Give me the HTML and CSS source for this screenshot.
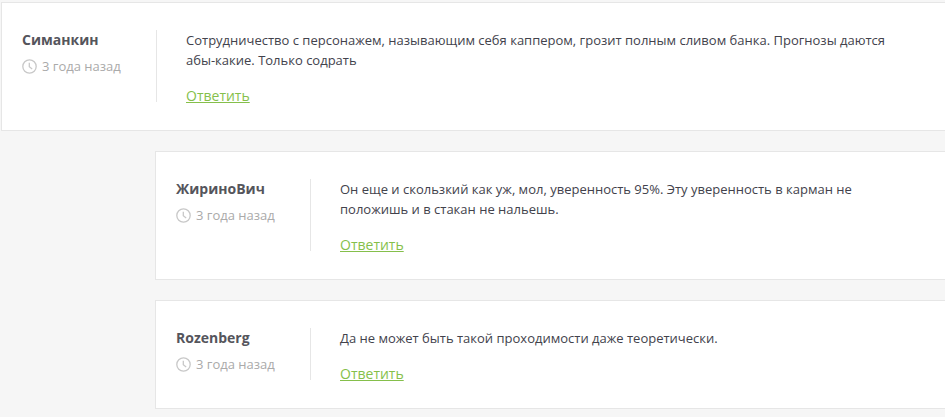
FILE: index.html
```
<!DOCTYPE html>
<html lang="ru">
<head>
    <meta charset="UTF-8">
    <meta name="viewport" content="width=device-width, initial-scale=1.0">
    <title>Комментарии</title>
    <link rel="stylesheet" href="styles.css">
</head>
<body>

    <div class="comments">
        <div class="comment">
            <div class="comment-author">
                <div class="comment-name">Симанкин</div>
                <div class="comment-date">
                    <svg class="icon-clock" viewBox="0 0 15 15"><circle cx="7.5" cy="7.5" r="6.7"/><path d="M7.3 3.8v4l2.9 2.2"/></svg>
                    <span>3 года назад</span>
                </div>
            </div>
            <div class="comment-body">
                <p>Сотрудничество с персонажем, называющим себя каппером, грозит полным сливом банка. Прогнозы даются абы-какие. Только содрать</p>
                <a class="comment-reply" href="#">Ответить</a>
            </div>
        </div>

        <!-- Replies -->
        <div class="comment comment-child">
            <div class="comment-author">
                <div class="comment-name">ЖириноВич</div>
                <div class="comment-date">
                    <svg class="icon-clock" viewBox="0 0 15 15"><circle cx="7.5" cy="7.5" r="6.7"/><path d="M7.3 3.8v4l2.9 2.2"/></svg>
                    <span>3 года назад</span>
                </div>
            </div>
            <div class="comment-body">
                <p>Он еще и скользкий как уж, мол, уверенность 95%. Эту уверенность в карман не положишь и в стакан не нальешь.</p>
                <a class="comment-reply" href="#">Ответить</a>
            </div>
        </div>

        <div class="comment comment-child">
            <div class="comment-author">
                <div class="comment-name">Rozenberg</div>
                <div class="comment-date">
                    <svg class="icon-clock" viewBox="0 0 15 15"><circle cx="7.5" cy="7.5" r="6.7"/><path d="M7.3 3.8v4l2.9 2.2"/></svg>
                    <span>3 года назад</span>
                </div>
            </div>
            <div class="comment-body">
                <p>Да не может быть такой проходимости даже теоретически.</p>
                <a class="comment-reply" href="#">Ответить</a>
            </div>
        </div>
    </div>

</body>
</html>
```
FILE: styles.css
```
* {
    box-sizing: border-box;
}
body {
    margin: 0;
    background: #f6f6f6;
    font-family: "Open Sans", "Noto Sans", sans-serif;
    color: #42424c;
}
.comments {
    padding: 2px 0 8px 1px;
}
.comment {
    display: flex;
    padding: 27px 20px 28px;
    background: #fff;
    border: 1px solid #e6e6e6;
    border-right: 0;
}
.comment + .comment {
    margin-top: 20px;
}
.comment-child {
    margin-left: 154px;
}
.comment-author {
    flex: 0 0 135px;
    border-right: 1px solid #e6e6e6;
}
.comment-name {
    font-size: 14px;
    font-weight: 700;
    line-height: 20px;
    color: #55555c;
}
.comment-date {
    display: flex;
    align-items: center;
    gap: 5px;
    margin-top: 6px;
    font-size: 13px;
    line-height: 20px;
    color: #aaa;
}
.icon-clock {
    width: 15px;
    height: 15px;
    fill: none;
    stroke: #c8c8c8;
    stroke-width: 1.3;
}
.comment-body {
    flex: 1;
    padding: 0 20px 0 29px;
    font-size: 13px;
    line-height: 20px;
}
.comment-body p {
    margin: 0 0 20px;
}
.comment-reply {
    display: block;
    width: max-content;
    font-size: 14px;
    line-height: 12px;
    color: #85bf4b;
}
```
